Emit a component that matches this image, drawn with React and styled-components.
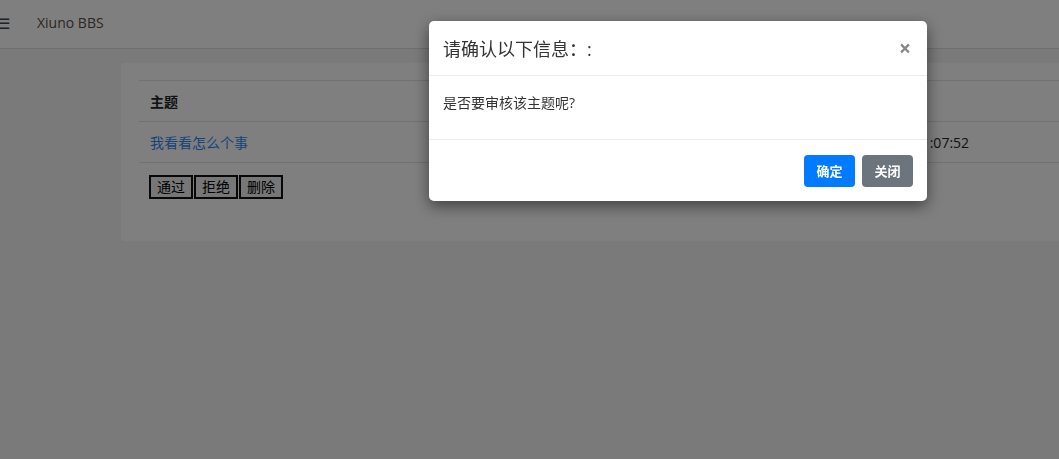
import React from "react";
import styled, { createGlobalStyle } from "styled-components";

const GlobalStyle = createGlobalStyle`
  html, body {
    margin: 0;
    padding: 0;
    background: #f4f4f4;
    overflow: hidden;
    font-family: "Open Sans", "Noto Sans CJK SC", sans-serif;
    font-size: 14px;
    color: #212529;
  }
`;

const Page = styled.div`
  width: 1059px;
  height: 459px;
  overflow: hidden;
`;

const Navbar = styled.div`
  height: 48px;
  background: #fff;
  border-bottom: 1px solid #dcdcdc;
  display: flex;
  align-items: center;
  font-size: 14px;
`;

const Toggler = styled.span`
  width: 40px;
  margin-left: -3px;
  font-size: 15px;
  color: #444;
  line-height: 1;
  margin-top: -2px;
`;

const Brand = styled.span`
  color: #5e4b43;
  margin-top: -4px;
`;

const Main = styled.div`
  padding: 14px 0 0 121px;
`;

const Card = styled.div`
  width: 1000px;
  background: #fff;
  border-radius: 4px;
  padding: 17px 18px 42px;
  box-sizing: border-box;
`;

const Table = styled.table`
  width: 940px;
  border-collapse: collapse;
  margin-bottom: 12px;
`;

const Cell = styled.td`
  border-top: 1px solid #dee2e6;
  border-bottom: 1px solid #dee2e6;
  padding: 0 11px;
  height: 40px;
  font-weight: ${(p) => (p.head ? 700 : 400)};
  width: ${(p) => p.w || "auto"};
  color: #212529;
`;

const Link = styled.a`
  color: #2f89f0;
  text-decoration: none;
`;

const Actions = styled.div`
  display: flex;
  gap: 1px;
  padding-left: 10px;
`;

const RawButton = styled.button`
  font-family: "Open Sans", "Noto Sans CJK SC", sans-serif;
  font-size: 14px;
  line-height: 18px;
  padding: 1px 6px;
  background: #efefef;
  border: 2px solid #111;
  color: #000;
`;

const Backdrop = styled.div`
  position: fixed;
  inset: 0;
  background: rgba(0, 0, 0, 0.5);
  padding: 21px 0 0 429px;
`;

const Dialog = styled.div`
  width: 498px;
  background: #fff;
  border-radius: 5px;
  box-shadow: 0 5px 15px rgba(0, 0, 0, 0.5);
  overflow: hidden;
`;

const Header = styled.div`
  height: 55px;
  padding: 0 14px;
  border-bottom: 1px solid #e9ecef;
  display: flex;
  align-items: center;
  justify-content: space-between;
  box-sizing: border-box;
`;

const Title = styled.h5`
  margin: 0;
  font-size: 18px;
  font-weight: 400;
  color: #333;
`;

const Close = styled.span`
  font-size: 21px;
  font-weight: 700;
  color: #888;
  line-height: 1;
  margin-right: 2px;
`;

const Body = styled.div`
  height: 64px;
  padding: 16px 14px 0;
  box-sizing: border-box;
  border-bottom: 1px solid #e9ecef;
  font-size: 14px;
  color: #333;
`;

const Footer = styled.div`
  height: 61px;
  padding: 0 14px;
  display: flex;
  align-items: center;
  justify-content: flex-end;
  gap: 7px;
`;

const Button = styled.button`
  width: 51px;
  height: 32px;
  border: none;
  border-radius: 4px;
  font-family: "Open Sans", "Noto Sans CJK SC", sans-serif;
  font-size: 13px;
  font-weight: 600;
  color: #fff;
  background: ${(p) => (p.primary ? "#007bff" : "#6c757d")};
`;

export default function App() {
  return (
    <Page>
      <GlobalStyle />
      <Navbar>
        <Toggler>☰</Toggler>
        <Brand>Xiuno BBS</Brand>
      </Navbar>
      <Main>
        <Card>
          <Table>
            <tbody>
              <tr>
                <Cell head w="665px">主题</Cell>
                <Cell head>时间</Cell>
              </tr>
              <tr>
                <Cell>
                  <Link href="#">我看看怎么个事</Link>
                </Cell>
                <Cell>2020-04-13 11:07:52</Cell>
              </tr>
            </tbody>
          </Table>
          <Actions>
            <RawButton>通过</RawButton>
            <RawButton>拒绝</RawButton>
            <RawButton>删除</RawButton>
          </Actions>
        </Card>
      </Main>
      <Backdrop>
        <Dialog>
          <Header>
            <Title>请确认以下信息：:</Title>
            <Close>×</Close>
          </Header>
          <Body>是否要审核该主题呢?</Body>
          <Footer>
            <Button primary>确定</Button>
            <Button>关闭</Button>
          </Footer>
        </Dialog>
      </Backdrop>
    </Page>
  );
}
